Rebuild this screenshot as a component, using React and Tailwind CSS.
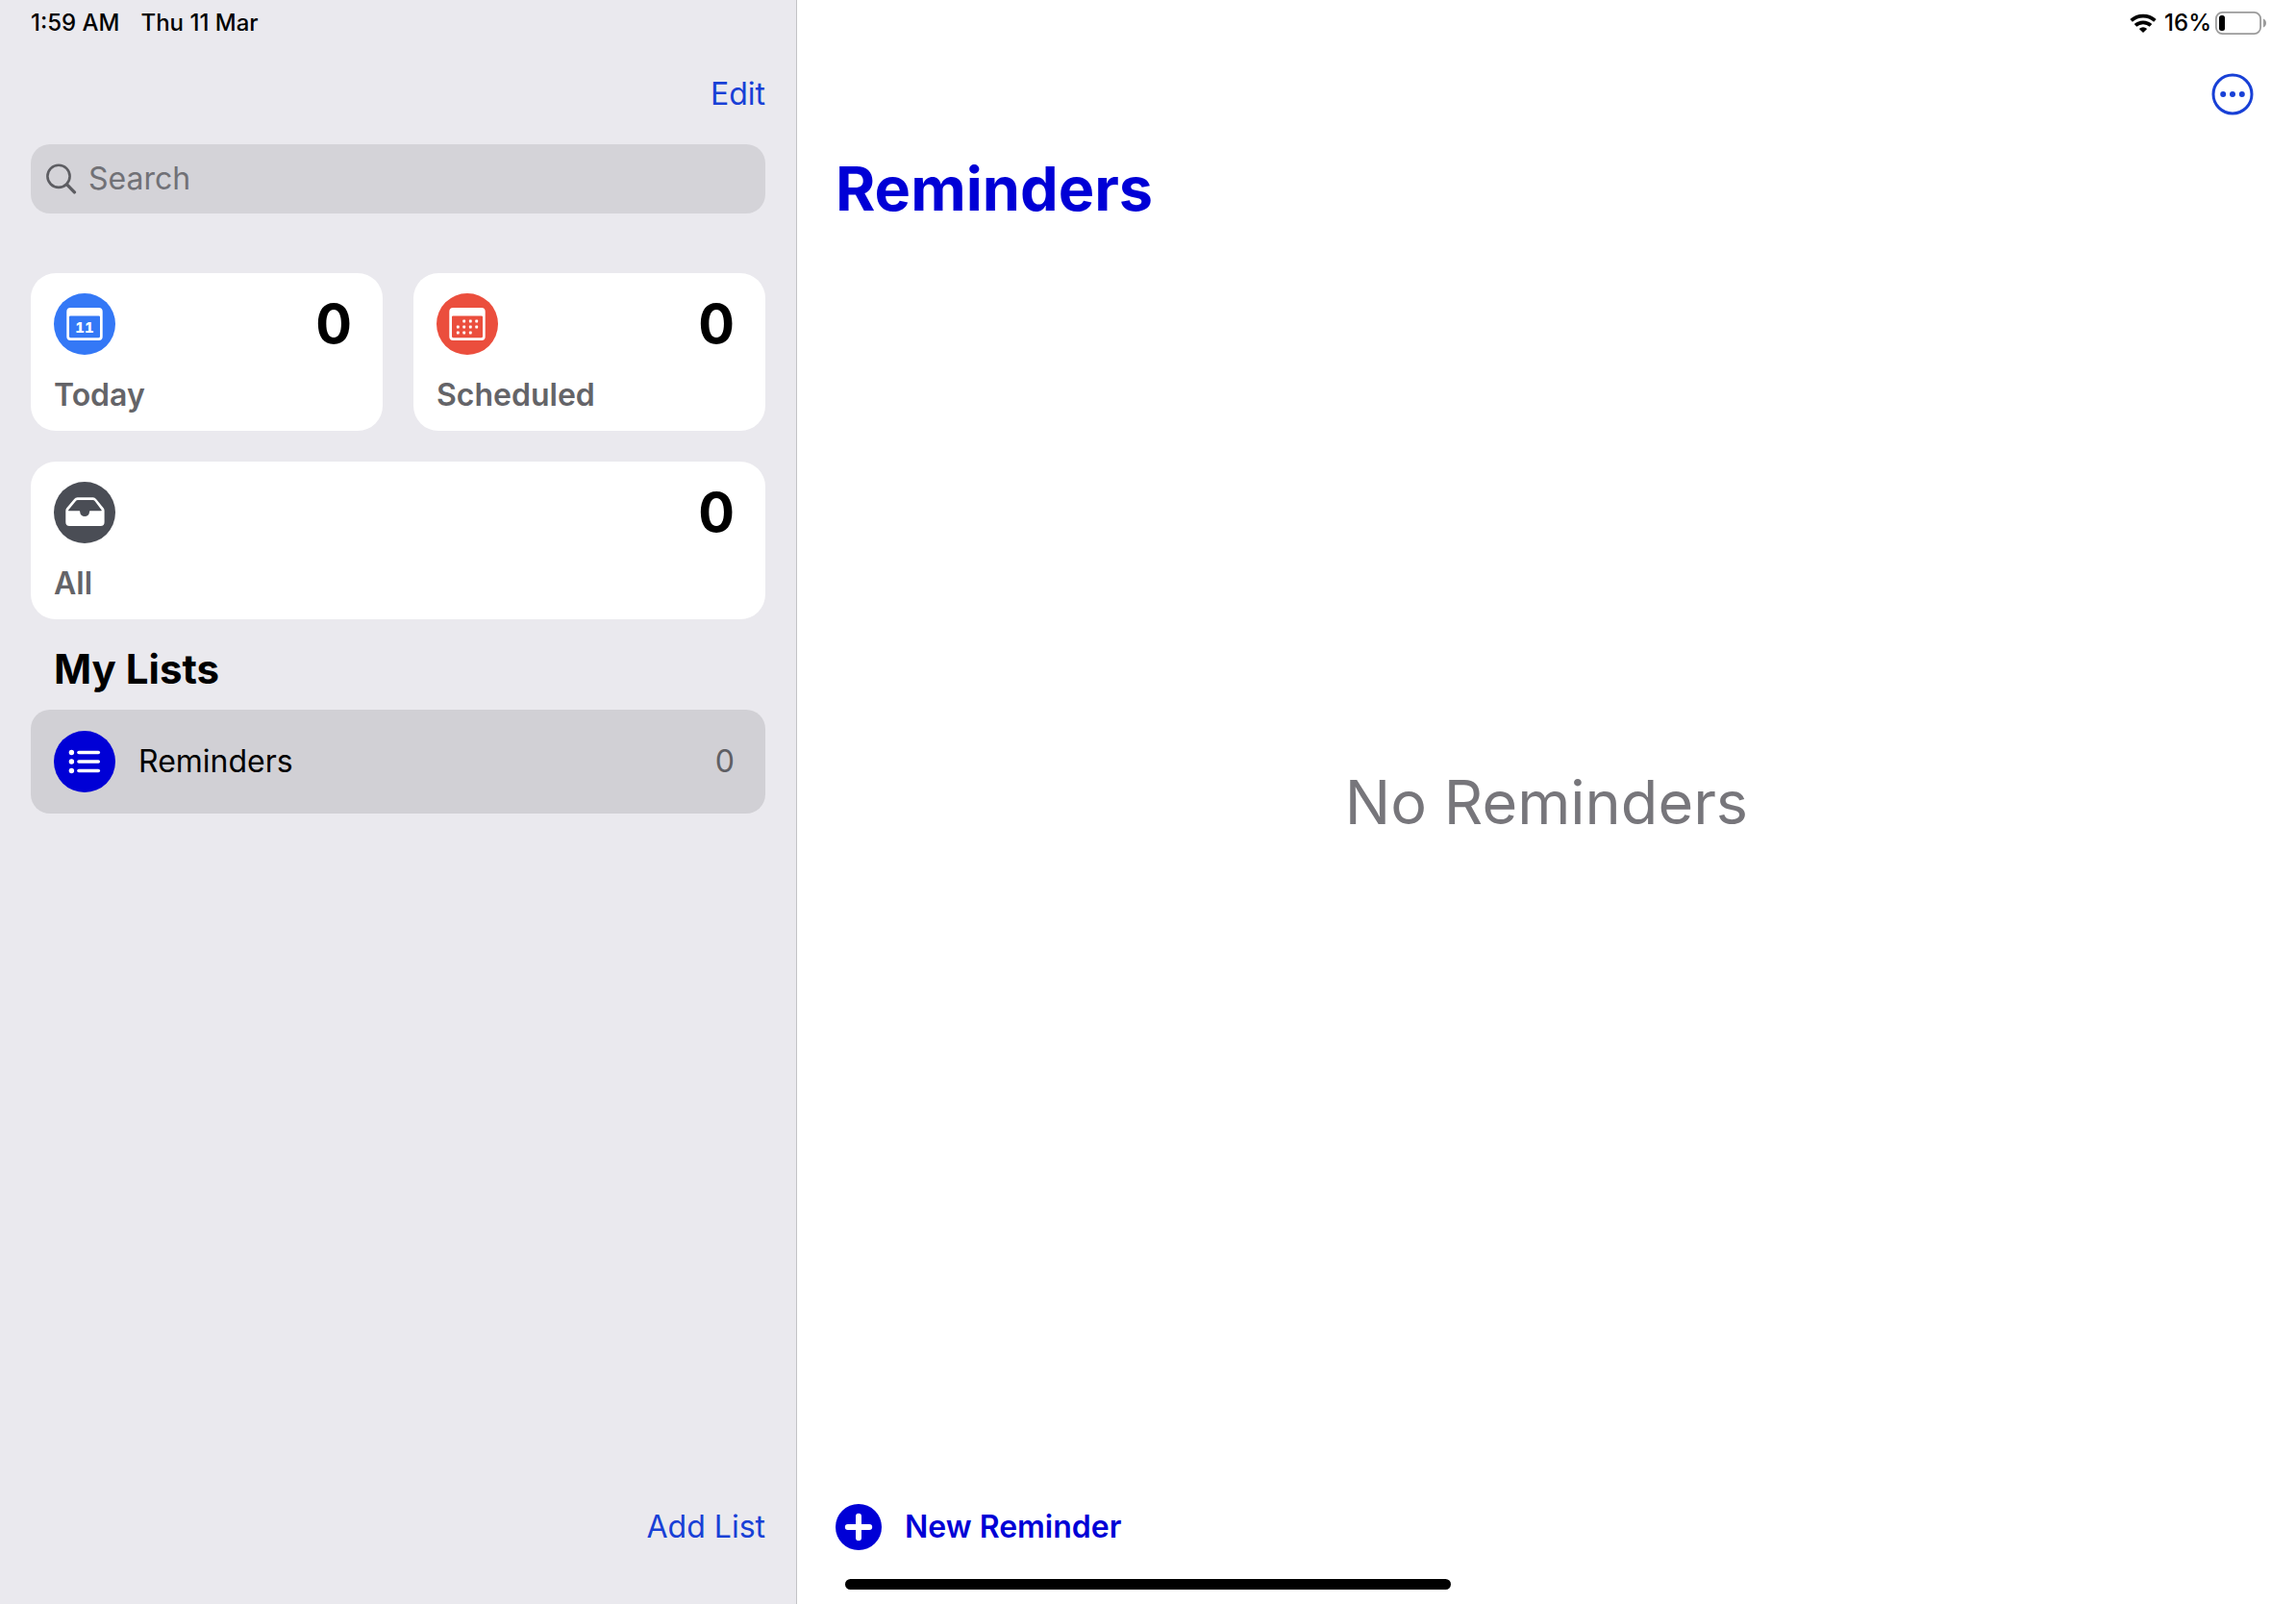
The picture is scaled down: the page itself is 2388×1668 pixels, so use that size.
import React from 'react'

const TodayIcon = () => (
  <svg className="w-16 h-16" viewBox="0 0 64 64" aria-hidden="true">
    <circle cx="32" cy="32" r="32" fill="#3478f6" />
    <path fill="#fff" fillRule="evenodd" d="M17.3 15h29.4a4 4 0 0 1 4 4v26a4 4 0 0 1-4 4H17.3a4 4 0 0 1-4-4V19a4 4 0 0 1 4-4ZM17.2 23.4a1.2 1.2 0 0 0-1.2 1.2v20.1a1.6 1.6 0 0 0 1.6 1.6h28.8a1.6 1.6 0 0 0 1.6-1.6V24.6a1.2 1.2 0 0 0-1.2-1.2Z" />
    <text x="32" y="41" textAnchor="middle" fill="#fff" className="text-[15px] font-extrabold tabular-nums">11</text>
  </svg>
)

const dots = [
  [28.7, 29], [35.3, 29], [41.7, 29],
  [22.3, 35], [28.7, 35], [35.3, 35], [41.7, 35],
  [22.3, 41], [28.7, 41], [35.3, 41],
]

const ScheduledIcon = () => (
  <svg className="w-16 h-16" viewBox="0 0 64 64" aria-hidden="true">
    <circle cx="32" cy="32" r="32" fill="#eb4e3d" />
    <path fill="#fff" fillRule="evenodd" d="M17.3 15h29.4a4 4 0 0 1 4 4v26a4 4 0 0 1-4 4H17.3a4 4 0 0 1-4-4V19a4 4 0 0 1 4-4ZM17.2 23.4a1.2 1.2 0 0 0-1.2 1.2v20.1a1.6 1.6 0 0 0 1.6 1.6h28.8a1.6 1.6 0 0 0 1.6-1.6V24.6a1.2 1.2 0 0 0-1.2-1.2Z" />
    {dots.map(([x, y]) => (
      <rect key={`${x}-${y}`} x={x - 1.4} y={y - 1.4} width="2.8" height="2.8" rx="0.6" fill="#fff" />
    ))}
  </svg>
)

const AllIcon = () => (
  <svg className="w-16 h-16" viewBox="0 0 64 64" aria-hidden="true">
    <circle cx="32" cy="32" r="32" fill="#4a4d55" />
    <path fill="#fff" fillRule="evenodd" d="M24.6 16.3h16.2a4 4 0 0 1 3.2 1.6l7.6 9.3a4.5 4.5 0 0 1 1 2.8v12a4 4 0 0 1-4 4H16.3a4 4 0 0 1-4-4V30a4.5 4.5 0 0 1 1-2.8l7.8-9.3a4.5 4.5 0 0 1 3.5-1.6ZM24.8 18.9a2.2 2.2 0 0 0-1.7.8l-7.8 9.5c-.4.5-.2 1 .4 1H26.2c.7 0 1 .4 1 1a4.9 4.9 0 0 0 9.8 0c0-.6.4-1 1-1h11c.7 0 .9-.5.5-1l-7.1-9.5a2.2 2.2 0 0 0-1.7-.8Z" />
  </svg>
)

const ListIcon = () => (
  <svg className="w-16 h-16" viewBox="0 0 64 64" aria-hidden="true">
    <circle cx="32" cy="32" r="32" fill="#0000d6" />
    {[22.5, 32, 41.5].map((y) => (
      <g key={y}>
        <circle cx="18.4" cy={y} r="2.7" fill="#fff" />
        <path d={`M26 ${y}h20.3`} stroke="#fff" strokeWidth="3.6" strokeLinecap="round" />
      </g>
    ))}
  </svg>
)

const SearchIcon = () => (
  <svg className="w-8 h-8 shrink-0" viewBox="0 0 32 32" fill="none" stroke="#5d5d62" strokeLinecap="round" aria-hidden="true">
    <circle cx="13" cy="13.3" r="11.6" strokeWidth="2.6" />
    <path d="M21.6 21.9l7.8 8" strokeWidth="3.4" />
  </svg>
)

const WifiIcon = () => (
  <svg className="w-7 h-5" viewBox="0 0 28 20" fill="none" stroke="#000" strokeWidth="3.8" aria-hidden="true">
    <path d="M1.6 7.3a18.5 18.5 0 0 1 24.8 0" />
    <path d="M6 12.4a12 12 0 0 1 16 0" />
    <path d="M9.8 16a6.5 6.5 0 0 1 8.4 0L14 20Z" fill="#000" stroke="none" />
  </svg>
)

const BatteryIcon = () => (
  <svg className="w-[54px] h-6" viewBox="0 0 54 24" aria-hidden="true">
    <rect x="0.9" y="0.9" width="46.2" height="22.2" rx="6.5" fill="none" stroke="#9b9b9b" strokeWidth="1.8" />
    <rect x="4" y="4" width="6" height="16" rx="2.5" fill="#000" />
    <path d="M50 7.5c2 .8 3 2.500 3 4.500s-1 3.700-3 4.500Z" fill="#9b9b9b" />
  </svg>
)

const SummaryCard = ({ icon, label, count, className = '' }) => (
  <button type="button" className={`block rounded-[26px] bg-white pl-6 pr-8 pt-[21px] pb-[17px] text-left ${className}`}>
    <span className="flex items-center justify-between">
      {icon}
      <span className="text-[56px] leading-[64px] font-bold text-black">{count}</span>
    </span>
    <span className="mt-[22px] block text-[32px] leading-10 font-semibold text-[#646468]">{label}</span>
  </button>
)

const Sidebar = () => (
  <aside className="flex w-[829px] max-w-[45%] shrink-0 flex-col border-r border-[#c3c3c6] bg-[#eae9ee] px-8">
    <div className="flex h-12 items-center gap-[22px] text-2xl font-medium">
      <span>1:59 AM</span>
      <span>Thu 11 Mar</span>
    </div>
    <div className="flex h-[100px] items-center justify-end">
      <button type="button" className="text-[32px] leading-10 text-[#1840d6]">Edit</button>
    </div>
    <label className="mt-[2px] flex h-[72px] items-center gap-3 rounded-[20px] bg-[#d4d3d8] px-4">
      <SearchIcon />
      <input
        type="search"
        aria-label="Search"
        placeholder="Search"
        className="min-w-0 flex-1 bg-transparent text-[32px] leading-10 outline-none placeholder:text-[#717176]"
      />
    </label>

    <div className="mt-[62px] grid grid-cols-2 gap-8">
      <SummaryCard icon={<TodayIcon />} label="Today" count={0} />
      <SummaryCard icon={<ScheduledIcon />} label="Scheduled" count={0} />
      <SummaryCard icon={<AllIcon />} label="All" count={0} className="col-span-2" />
    </div>

    <h2 className="mt-[26px] mb-4 pl-6 text-[42px] leading-[52px] font-bold">My Lists</h2>
    <ul>
      <li>
        <a href="#reminders" className="flex items-center gap-6 rounded-[20px] bg-[#d1d0d5] py-[22px] pl-6 pr-8">
          <ListIcon />
          <span className="flex-1 text-[32px] leading-10">Reminders</span>
          <span className="text-[32px] leading-10 text-[#5f5f64]">0</span>
        </a>
      </li>
    </ul>

    <div className="mt-auto flex justify-end pb-14">
      <button type="button" className="text-[32px] leading-[48px] text-[#1840d6]">Add List</button>
    </div>
  </aside>
)

const ReminderList = () => (
  <main className="relative flex min-w-0 flex-1 flex-col bg-white">
    <div className="flex h-12 items-center justify-end gap-2 pr-[30px] text-2xl font-medium">
      <WifiIcon />
      <span className="flex items-center gap-1">
        16%
        <BatteryIcon />
      </span>
    </div>
    <div className="flex h-[100px] items-center justify-end pr-11">
      <button type="button" aria-label="More">
        <svg className="w-11 h-11" viewBox="0 0 44 44" aria-hidden="true">
          <circle cx="22" cy="22" r="20" fill="none" stroke="#1840d6" strokeWidth="3" />
          <circle cx="12.2" cy="22" r="3" fill="#1840d6" />
          <circle cx="22" cy="22" r="3" fill="#1840d6" />
          <circle cx="31.8" cy="22" r="3" fill="#1840d6" />
        </svg>
      </button>
    </div>
    <h1 className="mt-2 px-10 text-[63px] leading-[80px] font-bold text-[#0000d6]">Reminders</h1>
    <div className="absolute inset-0 flex items-center justify-center pointer-events-none">
      <p className="text-[63px] leading-[80px] text-[#77767b]">No Reminders</p>
    </div>
    <div className="mt-auto px-10 pb-14">
      <button type="button" className="flex items-center gap-6 text-[32px] leading-[48px] font-semibold text-[#0000d6]">
        <svg className="w-12 h-12" viewBox="0 0 48 48" aria-hidden="true">
          <circle cx="24" cy="24" r="24" fill="#0000d6" />
          <path d="M24 12.8v22.4M12.8 24h22.4" stroke="#fff" strokeWidth="6" strokeLinecap="round" />
        </svg>
        New Reminder
      </button>
    </div>
  </main>
)

const App = () => (
  <div className="relative flex min-h-screen font-['Inter','Liberation_Sans',sans-serif] text-black">
    <Sidebar />
    <ReminderList />
    <div className="absolute inset-x-0 bottom-[15px] flex justify-center pointer-events-none">
      <div className="h-[11px] w-[630px] rounded-full bg-black" />
    </div>
  </div>
)

export default App
